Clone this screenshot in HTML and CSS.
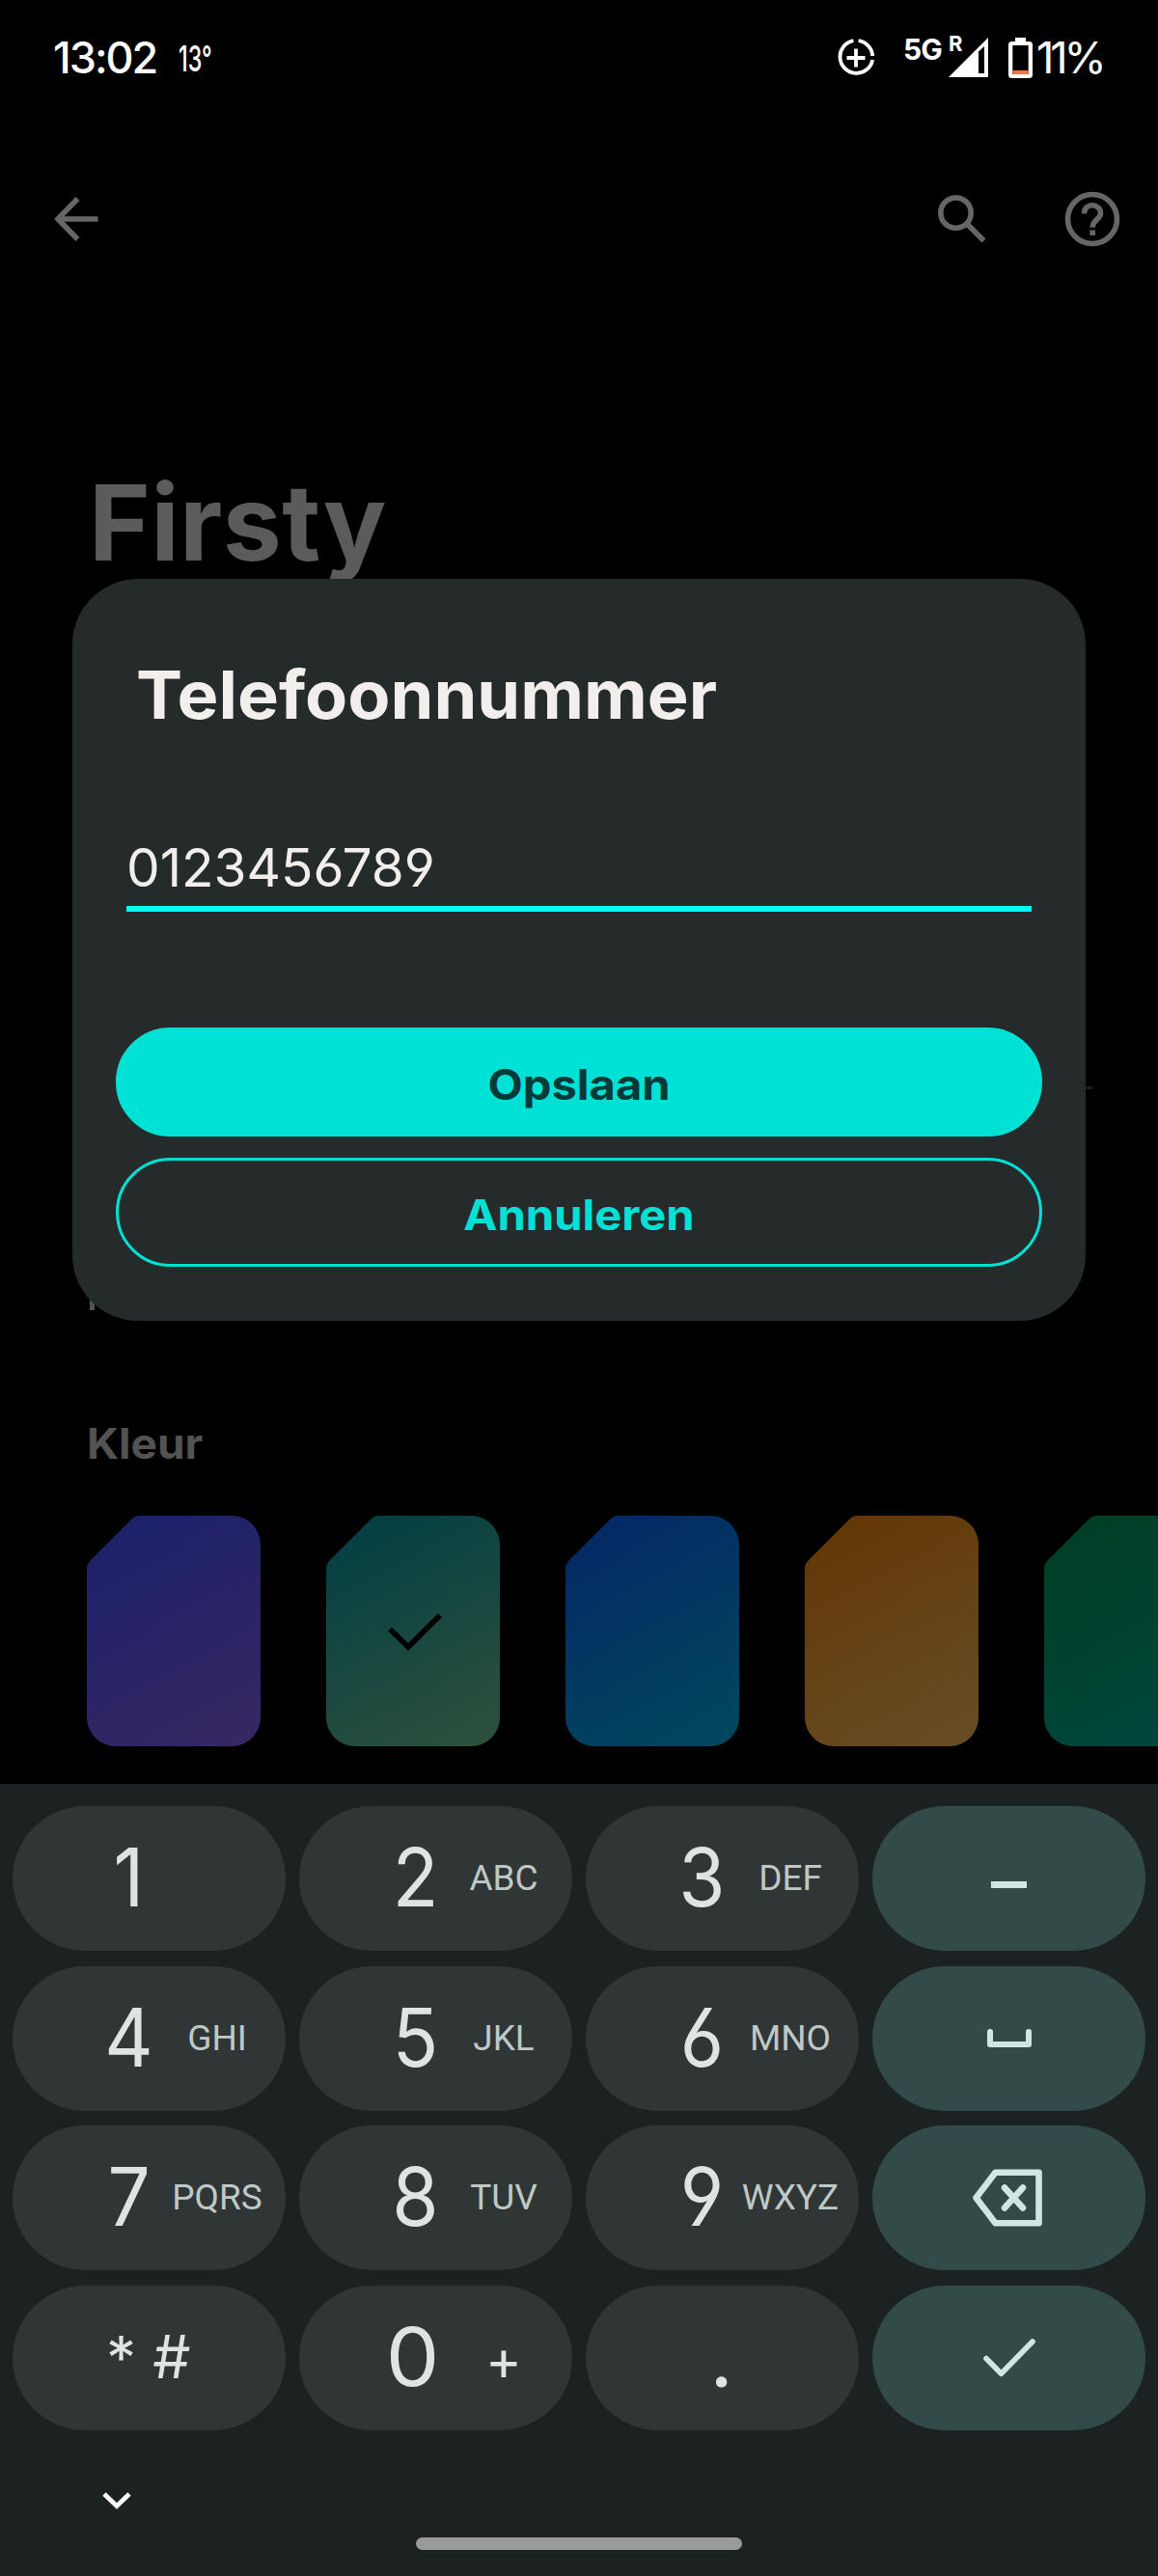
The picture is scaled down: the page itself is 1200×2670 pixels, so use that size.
FILE: index.html
```html
<!DOCTYPE html>
<html lang="nl">
<head>
<meta charset="utf-8">
<title>Firsty</title>
<link rel="stylesheet" href="styles.css">
</head>
<body>
<div class="screen">
  <main class="page">
    <header class="status">
      <span class="clock">13:02</span>
      <span class="temp">13°</span>
      <svg class="data-saver" viewBox="0 0 38 40" width="38" height="40" fill="none" stroke="#fff">
        <path d="M16.4 2.2A17 17 0 1 0 36.2 22M21.6 2.2A17 17 0 0 1 36.2 18" stroke-width="3.8"/>
        <path d="M19 10.5V29.5M9.5 20H28.5" stroke-width="3.8"/>
      </svg>
      <span class="net">5G</span>
      <span class="roam">R</span>
      <svg class="signal" viewBox="0 0 41 41" width="41" height="41">
        <path fill="#fff" fill-rule="evenodd" d="M0 41L41 0V41ZM31 14.5V37H37V9Z"/>
      </svg>
      <svg class="battery" viewBox="0 0 25 42" width="25" height="42">
        <path fill="#fff" fill-rule="evenodd" d="M7 0H18V4H21.5Q25 4 25 7.500V38.500Q25 42 21.500 42H3.500Q0 42 0 38.500V7.500Q0 4 3.500 4H7ZM4.300 8V38H20.700V8Z"/>
        <path fill="#ff7043" d="M4.300 34H20.700V38H4.300Z"/>
      </svg>
      <span class="percent">11%</span>
    </header>

    <nav class="appbar">
      <svg class="back" viewBox="0 0 46 46" width="46" height="46" fill="none" stroke="#666" stroke-width="5.6">
        <path d="M24.500 2L4 23L24.500 44M5 23H45.500"/>
      </svg>
      <svg class="search" viewBox="0 0 50 50" width="50" height="50" fill="none" stroke="#666" stroke-width="5.6">
        <circle cx="18.500" cy="18.700" r="15.700"/><path d="M30 30L47.500 47.500"/>
      </svg>
      <svg class="help" viewBox="0 0 58 58" width="58" height="58" fill="none" stroke="#666" stroke-width="5.600">
        <circle cx="29" cy="29" r="25.500"/>
        <path d="M20.500 23.500C20.500 17.500 24.500 14.700 29 14.700S37.500 18 37.500 23C37.500 29.500 29.200 29.500 29.200 37.800"/>
        <path d="M29.200 40.500V46"/>
      </svg>
    </nav>

    <h1 class="title">Firsty</h1>

    <section class="settings">
      <div class="field"></div>
      <div class="field-label"><i class="stem"></i></div>
      <h2 class="label">Kleur</h2>
    </section>

    <div class="colors">
      <div class="sim indigo"></div>
      <div class="sim teal">
        <svg viewBox="0 0 56 40" width="56" height="40" fill="none" stroke="#000" stroke-width="5.600"><path d="M2 17.500L21 36L54 3.200"/></svg>
      </div>
      <div class="sim blue"></div>
      <div class="sim amber"></div>
      <div class="sim green"></div>
    </div>
  </main>

  <section class="keyboard">
    <div class="keys">
      <div class="key"><b>1</b></div>
      <div class="key"><b>2</b><span>ABC</span></div>
      <div class="key"><b>3</b><span>DEF</span></div>
      <div class="key action"><svg viewBox="0 0 37 7" width="37" height="7" class="dash"><path fill="#cde8e4" d="M0 0H37V7H0Z"/></svg></div>
      <div class="key"><b>4</b><span>GHI</span></div>
      <div class="key"><b>5</b><span>JKL</span></div>
      <div class="key"><b>6</b><span>MNO</span></div>
      <div class="key action"><svg viewBox="0 0 46 19" width="46" height="19" fill="none" stroke="#cde8e4" stroke-width="6" stroke-linecap="round" stroke-linejoin="round"><path d="M3 3V16H43V3"/></svg></div>
      <div class="key"><b>7</b><span>PQRS</span></div>
      <div class="key"><b>8</b><span>TUV</span></div>
      <div class="key"><b>9</b><span>WXYZ</span></div>
      <div class="key action"><svg class="erase" viewBox="0 0 72 60" width="72" height="60" fill="none" stroke="#cde8e4" stroke-width="6.600" stroke-linecap="round" stroke-linejoin="round"><path d="M23.500 3.700H68.500V56.300H23.500L3.500 30Z"/><path d="M33 19.500L52 40.500M52 19.500L33 40.500"/></svg></div>
      <div class="key"><b class="star">*</b><b class="hash">#</b></div>
      <div class="key zero"><b>0</b><span class="plus">+</span></div>
      <div class="key"><b class="dot">.</b></div>
      <div class="key action"><svg viewBox="0 0 54 40" width="54" height="40" fill="none" stroke="#cde8e4" stroke-width="5.600" stroke-linecap="round" stroke-linejoin="round"><path d="M3 20.500L18.500 36.200L51 3"/></svg></div>
    </div>
    <svg class="hide" viewBox="0 0 30 18" width="30" height="18" fill="none" stroke="#fff" stroke-width="4.800"><path d="M2 2L15 14.500L28 2"/></svg>
    <div class="home"></div>
  </section>

  <section class="dialog">
    <h2 class="heading">Telefoonnummer</h2>
    <div class="input">0123456789</div>
    <button class="btn save"><span>Opslaan</span></button>
    <button class="btn cancel"><span>Annuleren</span></button>
  </section>
</div>
</body>
</html>
```
FILE: styles.css
```css
* { box-sizing: border-box; margin: 0; padding: 0; }
body { background: #000; font-family: Inter, "Open Sans", sans-serif; font-feature-settings: "cv03", "cv04"; }
svg { display: block; flex: none; }
.screen { position: relative; width: 1200px; height: 2670px; overflow: hidden; display: flex; flex-direction: column; }
.page { height: 1849px; flex: none; overflow: hidden; }

/* status bar */
.status { display: flex; align-items: center; height: 119px; padding: 0 0 0 55px; color: #fff; white-space: nowrap; }
.clock { width: 130px; font-size: 45px; font-weight: 500; letter-spacing: -2px; }
.temp { width: 40px; font-size: 37px; font-weight: 500; margin-top: 2px; transform: scaleX(.63); transform-origin: 0 50%; }
.data-saver { margin-left: 643px; }
.net { width: 47px; margin: -17px 0 0 30px; font-size: 30px; font-weight: 700; letter-spacing: -1px; }
.roam { width: 0; margin: -29px 0 0 0; font-size: 22px; font-weight: 700; }
.signal { margin-left: 0; }
.battery { margin-left: 21px; }
.percent { margin-left: 4px; font-size: 45px; font-weight: 400; letter-spacing: -4px; }

/* app bar */
.appbar { display: flex; align-items: center; height: 216px; padding: 0 39px 0 56px; }
.search { margin: -1px 0 0 auto; }
.help { margin: -1px 0 0 81px; }

.title { margin: 141px 0 0 92px; font-size: 109px; line-height: 130px; letter-spacing: .3px; font-weight: 700; color: #5a5b5a; }

/* settings behind the dialog */
.settings { margin: 0 68px 0 90px; }
.field { height: 523px; border-bottom: 3px solid #1a1c1c; }
.field-label { display: flex; height: 321px; padding: 197px 0 0 3px; }
.stem { width: 5px; height: 32px; background: #545352; }
.label { font-size: 44px; line-height: 92px; color: #545352; transform: scaleX(1.045); transform-origin: 0 50%; }

.colors { display: flex; gap: 68px; margin: 29px 0 0 90px; }
.sim {
  flex: none; width: 180px; height: 239px; display: flex; align-items: center; justify-content: center;
  clip-path: path("M0 56Q0 50 3.500 46.500L47 3Q50 0 55 0H150A30 30 0 0 1 180 30V209A30 30 0 0 1 150 239H30A30 30 0 0 1 0 209Z");
}
.indigo { background: linear-gradient(152deg, #19206a, #382862); }
.teal { background: linear-gradient(152deg, #003e44, #2f513c); }
.blue { background: linear-gradient(152deg, #052666, #00495d); }
.amber { background: linear-gradient(152deg, #643602, #664d28); }
.green { background: linear-gradient(152deg, #003e24, #00473e); }
.teal svg { margin-left: 4px; }

/* keyboard */
.keyboard { height: 821px; flex: none; background: #1c2121; padding: 23px 13px 0; }
.keys { display: grid; grid-template-columns: repeat(4, 283px); grid-auto-rows: 150px; gap: 15.500px 14px; }
.key { display: grid; grid-template-columns: 81px 79px 104px; align-items: center; border-radius: 75px; background: #303535; color: #dee4e2; text-align: center; }
.key b { grid-column: 2; margin-top: -2px; font-size: 84px; line-height: 100px; font-weight: 400; transform: scaleX(.93); }
.key span { font: 37.500px/50px Roboto, sans-serif; color: #bec9c7; margin-top: -2px; transform: scaleX(.985); }
.key .star, .key .hash { font-size: 62px; transform: none; }
.key .star { grid-column: 2; margin: 0 -2px 0 -18px; }
.key .hash { grid-column: 3; margin: -1px 84px 0 0; width: 60px; margin-left: -25px; }
.key.zero b { transform: translateX(-3px) scaleX(1.050); }
.key .plus { font-family: Inter, sans-serif; font-size: 58px; color: #dee4e2; margin-top: 5px; }
.key .dot { font-family: Lato, sans-serif; font-size: 90px; transform: translate(20px, -4px); }
.action { display: flex; justify-content: center; background: #324b48; }
.dash { margin-top: 13px; }
.erase { margin-right: 3px; }
.hide { margin: 64px 0 0 93px; }
.home { width: 338px; height: 13px; margin: 29px auto 0; border-radius: 7px; background: #999b9a; }

/* dialog */
.dialog { position: absolute; left: 75px; top: 600px; width: 1050px; height: 769px; padding: 70px 45px 0; border-radius: 68px; background: #252b2b; color: #f2eeec; }
.heading { padding-left: 21px; font-size: 69px; line-height: 100px; font-weight: 700; transform: scaleX(1.045); transform-origin: 21px 50%; }
.input { margin: 79px 11px 120px; height: 96px; border-bottom: 6px solid #00fff2; font-size: 55px; line-height: 100px; }
.btn { display: block; width: 960px; height: 113px; border: 3px solid #00e1d6; border-radius: 57px; font: 700 44px/107px Inter, sans-serif; }
.btn span { display: block; transform: translateY(2.500px) scaleX(1.070); }
.save { background: #00e1d6; color: #003b38; }
.cancel { margin-top: 22px; background: none; color: #00e1d6; }
```
